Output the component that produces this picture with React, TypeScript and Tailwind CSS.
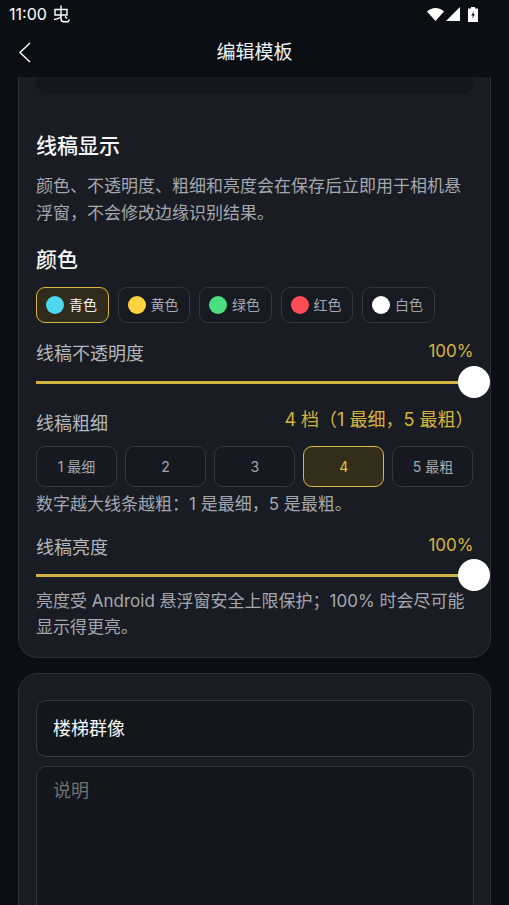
const colors = [
  { name: '青色', dot: 'bg-[#4dd8f0]', active: true },
  { name: '黄色', dot: 'bg-[#ffd23f]', active: false },
  { name: '绿色', dot: 'bg-[#4ade80]', active: false },
  { name: '红色', dot: 'bg-[#ff4d57]', active: false },
  { name: '白色', dot: 'bg-white', active: false },
];

const widths = [
  { label: '1 最细', active: false },
  { label: '2', active: false },
  { label: '3', active: false },
  { label: '4', active: true },
  { label: '5 最粗', active: false },
];

function StatusBar() {
  return (
    <div className="flex h-[28px] items-center justify-between pl-[9px] pr-[31px] text-white">
      <div className="flex items-center gap-[6px]">
        <span className="text-[16px] leading-none">11:00</span>
        <svg width="17" height="18" viewBox="0 0 17 18" fill="none" stroke="white" strokeWidth="1.4">
          <path d="M2 4.500h12v5.500H2z" />
          <path d="M8 .5v9.500" />
          <path d="M1 14.500c2.500 0 4.500-1 7-2.500" />
          <path d="M8 10v4c0 2 1 2.800 3 2.800h3c1.500 0 2-.8 2.300-2.500" />
          <path d="M12 11.500l2 2" />
        </svg>
      </div>
      <div className="flex items-center gap-[2px]">
        <svg width="17" height="13" viewBox="0 0 17 13" fill="white">
          <path d="M0 3.500C2.300 1.400 5.200 0 8.500 0s6.200 1.400 8.500 3.500L8.500 13z" />
        </svg>
        <svg width="14" height="14" viewBox="0 0 14 14" fill="white">
          <path d="M14 0v14H0z" />
        </svg>
        <svg width="10" height="15" viewBox="0 0 10 15" className="ml-[6px]">
          <path d="M3 0h4v1.500h3V15H0V1.500h3z" fill="white" />
          <path d="M5.800 4L3.300 8.500h1.600L4.300 12l2.500-4.700H5.200z" fill="#0b0e12" />
        </svg>
      </div>
    </div>
  );
}

function NavBar() {
  return (
    <div className="relative flex h-[49px] items-center justify-center pb-[1px]">
      <svg className="absolute left-[18px] top-[14px]" width="13" height="21" viewBox="0 0 13 21" fill="none" stroke="white" strokeWidth="1.400">
        <path d="M12 1L2 10.500 12 20" />
      </svg>
      <span className="text-[19px] leading-none text-[#f2f3f5]">编辑模板</span>
    </div>
  );
}

function Slider({ className }: { className: string }) {
  return (
    <div className={`relative h-[3px] bg-[#d4b440] ${className}`}>
      <div className="absolute right-[-16.5px] top-[-15px] h-[32px] w-[32px] rounded-full bg-white" />
    </div>
  );
}

export default function App() {
  return (
    <div
      className="flex h-[905px] w-[509px] flex-col overflow-hidden bg-[#0b0e12] text-white"
      style={{ fontFamily: 'Inter, "Noto Sans CJK SC", sans-serif' }}
    >
      <StatusBar />
      <NavBar />
      <div className="flex-1 overflow-hidden px-[18px]">
        <div className="h-[581px] rounded-b-[20px] border-x border-b border-[#2c3036] bg-[#191c23] pl-[17px] pr-[16.5px]">
          <div className="h-[17px] rounded-b-[12px] bg-[#14171d]" />

          <h2 className="mt-[37px] text-[21px] font-medium leading-[30px] text-[#f5f6f7]">线稿显示</h2>
          <p className="mt-[12px] text-[17px] leading-[27px] text-[#a4a8ae]">
            颜色、不透明度、粗细和亮度会在保存后立即用于相机悬浮窗，不会修改边缘识别结果。
          </p>

          <h3 className="mt-[18px] text-[21px] font-medium leading-[30px] text-[#f5f6f7]">颜色</h3>
          <div className="mt-[12px] flex gap-[9px]">
            {colors.map((c) => (
              <div
                key={c.name}
                className={`flex h-[36px] w-[72.5px] items-center gap-[5px] rounded-[9px] border pl-[9px] ${
                  c.active ? 'border-[#d9b83f] bg-[#302b1c]' : 'border-[#34373d] bg-[#171a20]'
                }`}
              >
                <span className={`h-[18px] w-[18px] rounded-full ${c.dot}`} />
                <span className={`text-[14px] leading-none ${c.active ? 'text-[#f2f3f5]' : 'text-[#a4a8ae]'}`}>{c.name}</span>
              </div>
            ))}
          </div>

          <div className="mt-[16px] flex items-start justify-between">
            <span className="mt-[2px] text-[18px] leading-[26px] text-[#b4b7bc]">线稿不透明度</span>
            <span className="text-[17px] leading-[24px] text-[#d4b440]">100%</span>
          </div>
          <Slider className="mt-[14px]" />

          <div className="mt-[23px] flex items-start justify-between">
            <span className="mt-[4px] text-[18px] leading-[26px] text-[#b4b7bc]">线稿粗细</span>
            <span className="text-[18px] leading-[26px] text-[#d4b440]">4 档（1 最细，5 最粗）</span>
          </div>
          <div className="mt-[9px] grid grid-cols-5 gap-[8px]">
            {widths.map((w) => (
              <div
                key={w.label}
                className={`flex h-[41px] items-center justify-center rounded-[9px] border text-[14px] ${
                  w.active ? 'border-[#d9b83f] bg-[#332e1a] text-[#e0c04a]' : 'border-[#34373d] bg-[#161a20] text-[#a4a8ae]'
                }`}
              >
                {w.label}
              </div>
            ))}
          </div>
          <p className="mt-[5px] text-[17px] leading-[24px] text-[#a4a8ae]">数字越大线条越粗：1 是最细，5 是最粗。</p>

          <div className="mt-[17px] flex items-start justify-between">
            <span className="mt-[2px] text-[18px] leading-[26px] text-[#b4b7bc]">线稿亮度</span>
            <span className="text-[17px] leading-[24px] text-[#d4b440]">100%</span>
          </div>
          <Slider className="mt-[13px]" />
          <p className="mt-[11px] text-[17px] leading-[26px] text-[#a4a8ae]">
            亮度受 Android 悬浮窗安全上限保护；100% 时会尽可能显示得更亮。
          </p>
        </div>

        <div className="mt-[15px] h-[300px] rounded-[20px] border border-[#2c3036] bg-[#191c23] pl-[17px] pr-[16.5px] pt-[26px]">
          <div className="flex h-[57px] items-center rounded-[10px] border border-[#34373d] bg-[#13161b] px-[16px] text-[18px] text-[#f5f6f7]">
            楼梯群像
          </div>
          <div className="mt-[9px] h-[200px] rounded-[10px] border border-[#34373d] bg-[#13161b] px-[16px] pt-[11px] text-[18px] leading-[26px] text-[#6f7378]">
            说明
          </div>
        </div>
      </div>
    </div>
  );
}
